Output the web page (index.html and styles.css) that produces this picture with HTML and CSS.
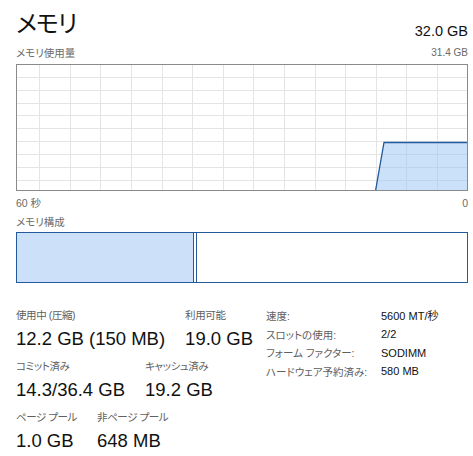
FILE: index.html
```html
<!DOCTYPE html>
<html lang="ja">
<head>
<meta charset="utf-8">
<title>メモリ</title>
<link rel="stylesheet" href="styles.css">
</head>
<body>
<div class="page">
  <div class="header">
    <div class="title">メモリ</div>
    <div class="total">32.0 GB</div>
  </div>

  <div class="chart-top">
    <span class="caption">メモリ使用量</span>
    <span class="caption-num">31.4 GB</span>
  </div>
  <div class="chart">
    <svg class="chart-svg" width="450" height="125" viewBox="0 0 450 125" preserveAspectRatio="none">
      <g class="grid">
        <line x1="0" y1="12.5" x2="450" y2="12.5"/>
        <line x1="0" y1="25.5" x2="450" y2="25.5"/>
        <line x1="0" y1="38.5" x2="450" y2="38.5"/>
        <line x1="0" y1="50.5" x2="450" y2="50.5"/>
        <line x1="0" y1="63.5" x2="450" y2="63.5"/>
        <line x1="0" y1="76.5" x2="450" y2="76.5"/>
        <line x1="0" y1="89.5" x2="450" y2="89.5"/>
        <line x1="0" y1="102.5" x2="450" y2="102.5"/>
        <line x1="0" y1="115.5" x2="450" y2="115.5"/>
        <line x1="22.5" y1="0" x2="22.5" y2="125"/>
        <line x1="53.5" y1="0" x2="53.5" y2="125"/>
        <line x1="83.5" y1="0" x2="83.5" y2="125"/>
        <line x1="114.5" y1="0" x2="114.5" y2="125"/>
        <line x1="145.5" y1="0" x2="145.5" y2="125"/>
        <line x1="175.5" y1="0" x2="175.5" y2="125"/>
        <line x1="206.5" y1="0" x2="206.5" y2="125"/>
        <line x1="236.5" y1="0" x2="236.5" y2="125"/>
        <line x1="267.5" y1="0" x2="267.5" y2="125"/>
        <line x1="298.5" y1="0" x2="298.5" y2="125"/>
        <line x1="328.5" y1="0" x2="328.5" y2="125"/>
        <line x1="359.5" y1="0" x2="359.5" y2="125"/>
        <line x1="389.5" y1="0" x2="389.5" y2="125"/>
        <line x1="420.5" y1="0" x2="420.5" y2="125"/>
      </g>
      <polygon class="area" points="358.5,126 367,77.5 451,77.5 451,126"/>
      <polyline class="area-line" points="358.5,126 367,77.5 451,77.5"/>
    </svg>
  </div>
  <div class="axis">
    <span>60 秒</span>
    <span>0</span>
  </div>

  <div class="caption comp-caption">メモリ構成</div>
  <div class="composition">
    <div class="seg seg-used" style="width:178px"></div>
    <div class="seg seg-mod" style="width:3px"></div>
    <div class="seg seg-rest"></div>
  </div>

  <div class="stats">
    <div class="stat-rows">
      <div class="stat-row">
        <div class="stat">
          <div class="stat-label">使用中 (圧縮)</div>
          <div class="stat-value">12.2 GB (150 MB)</div>
        </div>
        <div class="stat">
          <div class="stat-label">利用可能</div>
          <div class="stat-value">19.0 GB</div>
        </div>
      </div>
      <div class="stat-row">
        <div class="stat">
          <div class="stat-label">コミット済み</div>
          <div class="stat-value">14.3/36.4 GB</div>
        </div>
        <div class="stat">
          <div class="stat-label">キャッシュ済み</div>
          <div class="stat-value">19.2 GB</div>
        </div>
      </div>
      <div class="stat-row">
        <div class="stat">
          <div class="stat-label">ページ プール</div>
          <div class="stat-value">1.0 GB</div>
        </div>
        <div class="stat">
          <div class="stat-label">非ページ プール</div>
          <div class="stat-value">648 MB</div>
        </div>
      </div>
    </div>

    <div class="details">
      <span class="d-label">速度:</span><span class="d-value">5600 MT/秒</span>
      <span class="d-label">スロットの使用:</span><span class="d-value">2/2</span>
      <span class="d-label">フォーム ファクター:</span><span class="d-value">SODIMM</span>
      <span class="d-label">ハードウェア予約済み:</span><span class="d-value">580 MB</span>
    </div>
  </div>
</div>
</body>
</html>
```

FILE: styles.css
```css
html, body {
  margin: 0;
  padding: 0;
  background: #ffffff;
}

body {
  font-family: "Liberation Sans", "Noto Sans CJK JP", sans-serif;
  font-feature-settings: "palt";
  color: #1a1a1a;
}

.page {
  padding: 0 5px 0 16px;
}

.header {
  display: flex;
  justify-content: space-between;
  align-items: flex-end;
  height: 40px;
}

.title {
  font-family: "Noto Sans CJK JP", sans-serif;
  font-size: 24px;
  line-height: 24px;
  font-weight: 400;
  letter-spacing: -1px;
  color: #111;
  margin-bottom: 6px;
}

.total {
  font-size: 14.5px;
  line-height: 17px;
  color: #111;
}

.chart-top {
  display: flex;
  justify-content: space-between;
  align-items: center;
  height: 14px;
  margin-top: 6px;
  margin-bottom: 4px;
}

.caption {
  font-size: 10.5px;
  line-height: 14px;
  color: #6a6a6a;
}

.caption-num {
  font-size: 10px;
  line-height: 14px;
  color: #6a6a6a;
}

.chart {
  height: 125px;
  border: 1px solid #8a8a8a;
}

.chart-svg {
  display: block;
  width: 100%;
  height: 125px;
}

.grid line {
  stroke: #e4e4e4;
  stroke-width: 1;
}

.area {
  fill: #9cc6f5;
  fill-opacity: 0.52;
}

.area-line {
  fill: none;
  stroke: #225a9c;
  stroke-width: 1.3;
}

.axis {
  display: flex;
  justify-content: space-between;
  font-size: 10.5px;
  line-height: 14px;
  color: #6a6a6a;
  margin-top: 5px;
}

.comp-caption {
  display: block;
  margin-top: 5px;
  margin-bottom: 3px;
}

.composition {
  display: flex;
  height: 51px;
}

.seg {
  box-sizing: border-box;
  height: 51px;
  border: 1px solid #225a9c;
}

.seg-used {
  background: #cce0fa;
}

.seg-mod {
  border-left: none;
  background: #ffffff;
}

.seg-rest {
  flex: 1;
  border-left: none;
  background: #ffffff;
}

.stats {
  display: grid;
  grid-template-columns: 250px 1fr;
  margin-top: 25px;
}

.stat-rows {
  display: flex;
  flex-direction: column;
  gap: 9px;
}

.stat-row {
  display: flex;
  gap: 20px;
}

.stat-label {
  font-size: 10.5px;
  line-height: 14px;
  letter-spacing: -0.4px;
  color: #606060;
  margin-bottom: 6px;
  white-space: nowrap;
}

.stat-value {
  font-size: 18.5px;
  line-height: 22px;
  color: #111;
  white-space: nowrap;
}

.details {
  display: grid;
  grid-template-columns: 115px auto;
  grid-auto-rows: 18.7px;
  align-items: center;
  align-self: start;
  margin-top: -2px;
}

.d-label {
  font-size: 10.5px;
  color: #606060;
  white-space: nowrap;
}

.d-value {
  font-size: 11px;
  color: #111;
  white-space: nowrap;
}
```
